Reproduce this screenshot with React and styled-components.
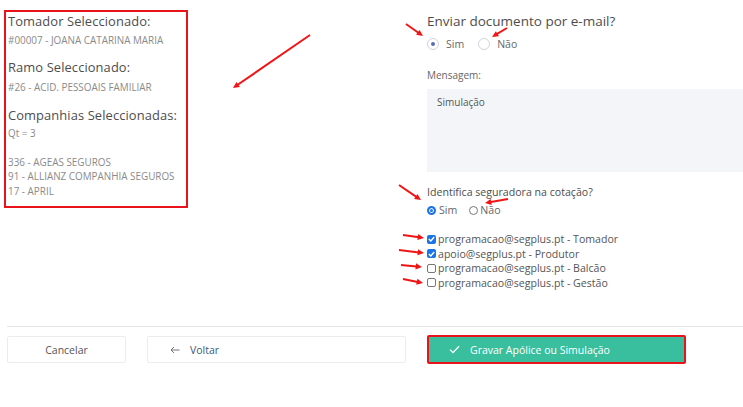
import React from "react";
import styled, { createGlobalStyle } from "styled-components";

const GlobalStyle = createGlobalStyle`
  html, body {
    margin: 0;
    padding: 0;
    background: #fff;
    font-family: "Open Sans", "Noto Sans", sans-serif;
    color: #4a4a4a;
  }
  * { box-sizing: border-box; }
`;

const Page = styled.div`
  position: relative;
  width: 743px;
  height: 407px;
  overflow: hidden;
`;

const Top = styled.div`
  display: grid;
  grid-template-columns: 427px 1fr;
  height: 326px;
`;

const SummaryBox = styled.div`
  margin: 10px 0 0 4px;
  width: 184px;
  height: 198px;
  border: 2px solid #e8131b;
  padding: 0 0 0 2px;
`;

const Heading = styled.div`
  font-size: 12.9px;
  font-weight: 500;
  color: #4d4d4d;
  line-height: 18px;
  letter-spacing: 0.1px;
  margin-top: ${(p) => p.$mt || 0}px;
`;

const Info = styled.div`
  font-size: 9.9px;
  color: #8a8a8a;
  line-height: ${(p) => p.$lh || 14.5}px;
  margin-top: ${(p) => p.$mt || 0}px;
`;

const Right = styled.div`
  padding-top: 12px;
  display: flex;
  flex-direction: column;
`;

const Question = styled.div`
  font-size: ${(p) => p.$size || 13.5}px;
  color: #4d4d4d;
  line-height: 18px;
  margin-top: ${(p) => p.$mt || 0}px;
`;

const RadioRow = styled.div`
  display: flex;
  align-items: center;
  gap: ${(p) => p.$gap || 12}px;
  margin-top: ${(p) => p.$mt || 0}px;
  font-size: ${(p) => p.$size || 10.5}px;
  color: #666;
`;

const RadioItem = styled.label`
  display: flex;
  align-items: center;
  gap: ${(p) => p.$gap || 7}px;
`;

const SoftRadio = styled.span`
  width: 12px;
  height: 12px;
  border-radius: 50%;
  border: 1px solid #cfd4dc;
  display: inline-flex;
  align-items: center;
  justify-content: center;
  &::after {
    content: "";
    width: 4px;
    height: 4px;
    border-radius: 50%;
    background: ${(p) => (p.$on ? "#5a6bb5" : "transparent")};
  }
`;

const NativeRadio = styled.span`
  width: 9px;
  height: 9px;
  border-radius: 50%;
  border: ${(p) => (p.$on ? "2px solid #1a73e8" : "1px solid #777")};
  background: ${(p) => (p.$on ? "#1a73e8" : "#fff")};
  box-shadow: ${(p) => (p.$on ? "inset 0 0 0 1px #fff" : "none")};
`;

const Label = styled.div`
  font-size: 10px;
  color: #666;
  margin-top: 17px;
  line-height: 14px;
`;

const MessageBox = styled.div`
  margin-top: 7px;
  height: 83px;
  width: 330px;
  background: #f3f5f9;
  padding: 6px 10px;
  font-size: 10px;
  color: #555;
`;

const CheckList = styled.div`
  margin-top: 15px;
  display: flex;
  flex-direction: column;
`;

const CheckRow = styled.label`
  display: flex;
  align-items: center;
  gap: 2px;
  height: 14.5px;
  font-size: 10.6px;
  color: #555;
`;

const Box = styled.span`
  width: 9px;
  height: 9px;
  border-radius: 2px;
  border: ${(p) => (p.$on ? "none" : "1px solid #777")};
  background: ${(p) => (p.$on ? "#1a73e8" : "#fff")};
  display: inline-flex;
  align-items: center;
  justify-content: center;
`;

const Divider = styled.div`
  margin-left: 7px;
  height: 1px;
  background: #e6e6e6;
`;

const Actions = styled.div`
  display: flex;
  align-items: center;
  padding: 8px 0 0 7px;
`;

const Button = styled.button`
  height: ${(p) => p.$h || 27}px;
  width: ${(p) => p.$w}px;
  margin-left: ${(p) => p.$ml || 0}px;
  border: ${(p) => (p.$primary ? "2px solid #e8131b" : "1px solid #ececec")};
  background: ${(p) => (p.$primary ? "#39be9e" : "#fff")};
  color: ${(p) => (p.$primary ? "#fff" : p.$blue ? "#3a5a7a" : "#555")};
  border-radius: 2px;
  font-family: inherit;
  font-size: 10.5px;
  display: flex;
  align-items: center;
  justify-content: ${(p) => (p.$left ? "flex-start" : "center")};
  padding: ${(p) => (p.$left ? `0 0 0 ${p.$pl}px` : "0")};
  gap: ${(p) => p.$gap || 0}px;
`;

const Overlay = styled.svg`
  position: absolute;
  inset: 0;
  pointer-events: none;
`;

const arrows = [
  [310, 35, 233, 88],
  [406, 24, 423, 36],
  [507, 28, 492, 37],
  [399, 185, 421, 200],
  [508, 199, 485, 203],
  [403, 235, 424, 238],
  [399, 250, 424, 253],
  [401, 265, 422, 267],
  [403, 279, 423, 283],
];

function Arrow({ x1, y1, x2, y2 }) {
  const a = Math.atan2(y2 - y1, x2 - x1);
  const s = 7;
  const w = 0.45;
  const p1 = [x2 - s * Math.cos(a - w), y2 - s * Math.sin(a - w)];
  const p2 = [x2 - s * Math.cos(a + w), y2 - s * Math.sin(a + w)];
  return (
    <g>
      <line x1={x1} y1={y1} x2={x2 - 3 * Math.cos(a)} y2={y2 - 3 * Math.sin(a)} stroke="#f01515" strokeWidth="2" />
      <polygon points={`${x2},${y2} ${p1[0]},${p1[1]} ${p2[0]},${p2[1]}`} fill="#f01515" />
    </g>
  );
}

const Tick = () => (
  <svg width="7" height="6" viewBox="0 0 7 6">
    <path d="M0.8 3 L2.8 5 L6.2 1" fill="none" stroke="#fff" strokeWidth="1.4" />
  </svg>
);

const emails = [
  ["programacao@segplus.pt - Tomador", true],
  ["apoio@segplus.pt - Produtor", true],
  ["programacao@segplus.pt - Balcão", false],
  ["programacao@segplus.pt - Gestão", false],
];

export default function App() {
  return (
    <Page>
      <GlobalStyle />
      <Top>
        <div>
          <SummaryBox>
            <Heading>Tomador Seleccionado:</Heading>
            <Info $mt={3}>#00007 - JOANA CATARINA MARIA</Info>
            <Heading $mt={10}>Ramo Seleccionado:</Heading>
            <Info $mt={4}>#26 - ACID. PESSOAIS FAMILIAR</Info>
            <Heading $mt={12}>Companhias Seleccionadas:</Heading>
            <Info $mt={2}>Qt = 3</Info>
            <Info $mt={14}>336 - AGEAS SEGUROS</Info>
            <Info>91 - ALLIANZ COMPANHIA SEGUROS</Info>
            <Info>17 - APRIL</Info>
          </SummaryBox>
        </div>
        <Right>
          <Question>Enviar documento por e-mail?</Question>
          <RadioRow $mt={7} $gap={14}>
            <RadioItem>
              <SoftRadio $on />
              Sim
            </RadioItem>
            <RadioItem>
              <SoftRadio />
              Não
            </RadioItem>
          </RadioRow>
          <Label>Mensagem:</Label>
          <MessageBox>Simulação</MessageBox>
          <Question $size={10.6} $mt={11}>Identifica seguradora na cotação?</Question>
          <RadioRow $mt={2} $gap={12} $size={10.6}>
            <RadioItem $gap={3}>
              <NativeRadio $on />
              Sim
            </RadioItem>
            <RadioItem $gap={2}>
              <NativeRadio />
              Não
            </RadioItem>
          </RadioRow>
          <CheckList>
            {emails.map(([text, on]) => (
              <CheckRow key={text}>
                <Box $on={on}>{on && <Tick />}</Box>
                {text}
              </CheckRow>
            ))}
          </CheckList>
        </Right>
      </Top>
      <Divider />
      <Actions>
        <Button $w={119}>Cancelar</Button>
        <Button $w={259} $ml={21} $left $pl={22} $gap={10} $blue>
          <svg width="10" height="8" viewBox="0 0 10 8">
            <path d="M9.5 4 H1 M4 1 L1 4 L4 7" fill="none" stroke="#777" strokeWidth="1" />
          </svg>
          Voltar
        </Button>
        <Button $w={259} $h={29} $ml={21} $primary $left $pl={20} $gap={10}>
          <svg width="11" height="9" viewBox="0 0 11 9">
            <path d="M1 4.6 L4 7.6 L10 1.2" fill="none" stroke="#fff" strokeWidth="1.3" />
          </svg>
          Gravar Apólice ou Simulação
        </Button>
      </Actions>
      <Overlay width="743" height="407">
        {arrows.map(([x1, y1, x2, y2], i) => (
          <Arrow key={i} x1={x1} y1={y1} x2={x2} y2={y2} />
        ))}
      </Overlay>
    </Page>
  );
}
